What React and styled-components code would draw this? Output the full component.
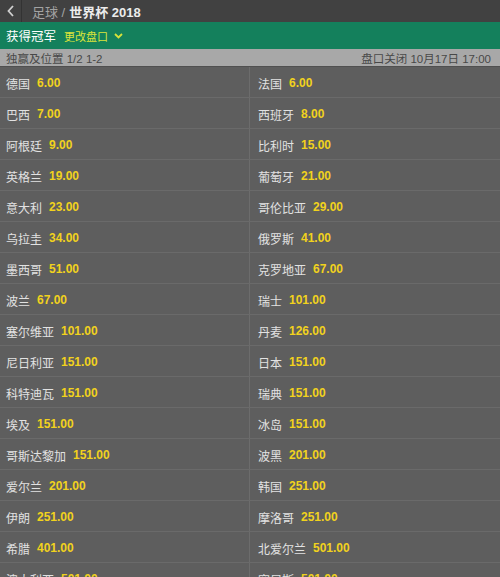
import styled, { createGlobalStyle } from "styled-components";

const GlobalStyle = createGlobalStyle`
  html, body {
    margin: 0;
    padding: 0;
    background: #5e5e5e;
    font-family: "Liberation Sans", "Noto Sans CJK SC", sans-serif;
  }
`;

const selections = [
  ["德国", "6.00", "法国", "6.00"],
  ["巴西", "7.00", "西班牙", "8.00"],
  ["阿根廷", "9.00", "比利时", "15.00"],
  ["英格兰", "19.00", "葡萄牙", "21.00"],
  ["意大利", "23.00", "哥伦比亚", "29.00"],
  ["乌拉圭", "34.00", "俄罗斯", "41.00"],
  ["墨西哥", "51.00", "克罗地亚", "67.00"],
  ["波兰", "67.00", "瑞士", "101.00"],
  ["塞尔维亚", "101.00", "丹麦", "126.00"],
  ["尼日利亚", "151.00", "日本", "151.00"],
  ["科特迪瓦", "151.00", "瑞典", "151.00"],
  ["埃及", "151.00", "冰岛", "151.00"],
  ["哥斯达黎加", "151.00", "波黑", "201.00"],
  ["爱尔兰", "201.00", "韩国", "251.00"],
  ["伊朗", "251.00", "摩洛哥", "251.00"],
  ["希腊", "401.00", "北爱尔兰", "501.00"],
  ["澳大利亚", "501.00", "突尼斯", "501.00"],
];

const App = () => {
  return (
    <>
      <GlobalStyle />
      <Page>
        <TopBar>
          <BackButton>
            <svg width="8" height="12" viewBox="0 0 8 12">
              <path d="M6 1 L1.5 6 L6 11" fill="none" stroke="#d0d0d0" strokeWidth="1.8" />
            </svg>
          </BackButton>
          <Crumbs>
            <CrumbMuted>足球 /</CrumbMuted>
            <CrumbCurrent>世界杯 2018</CrumbCurrent>
          </Crumbs>
        </TopBar>
        <MarketBar>
          <MarketTitle>获得冠军</MarketTitle>
          <ChangeMarket>
            更改盘口
            <svg width="9" height="6" viewBox="0 0 9 6">
              <path d="M1 1 L4.5 4.5 L8 1" fill="none" stroke="#d8e23a" strokeWidth="1.8" />
            </svg>
          </ChangeMarket>
        </MarketBar>
        <InfoBar>
          <span>独赢及位置 1/2 1-2</span>
          <span>盘口关闭 10月17日 17:00</span>
        </InfoBar>
        <Grid>
          {selections.map(([a, oa, b, ob]) => (
            <Row key={a}>
              <Cell>
                <Name>{a}</Name>
                <Odds>{oa}</Odds>
              </Cell>
              <Cell $right>
                <Name>{b}</Name>
                <Odds>{ob}</Odds>
              </Cell>
            </Row>
          ))}
        </Grid>
      </Page>
    </>
  );
};

export default App;

const Page = styled.div`
  width: 500px;
  height: 577px;
  overflow: hidden;
  background: #5e5e5e;
`;

const TopBar = styled.div`
  height: 22px;
  display: flex;
  align-items: center;
  background: #414141;
`;

const BackButton = styled.div`
  width: 22px;
  height: 22px;
  display: flex;
  align-items: center;
  justify-content: center;
  border-right: 1px solid #333333;
  box-sizing: border-box;
`;

const Crumbs = styled.div`
  display: flex;
  gap: 4px;
  padding-left: 10px;
  font-size: 13px;
`;

const CrumbMuted = styled.span`
  color: #a3a3a3;
`;

const CrumbCurrent = styled.span`
  color: #ececec;
  font-weight: bold;
`;

const MarketBar = styled.div`
  height: 27px;
  display: flex;
  align-items: center;
  gap: 8px;
  padding: 0 6px;
  background: #14805c;
`;

const MarketTitle = styled.span`
  color: #ffffff;
  font-size: 12.5px;
`;

const ChangeMarket = styled.span`
  display: flex;
  align-items: center;
  gap: 6px;
  color: #dbe43a;
  font-size: 11px;
`;

const InfoBar = styled.div`
  height: 17px;
  display: flex;
  align-items: center;
  justify-content: space-between;
  padding: 0 9px 0 6px;
  background: #a8a8a8;
  color: #484848;
  font-size: 11.5px;
  border-bottom: 1px solid #505050;
`;

const Grid = styled.div`
  display: flex;
  flex-direction: column;
`;

const Row = styled.div`
  display: grid;
  grid-template-columns: 249px 1fr;
  height: 31px;
  box-sizing: border-box;
  border-bottom: 1px solid #6a6a6a;
`;

const Cell = styled.div`
  display: flex;
  align-items: center;
  gap: 7px;
  padding-top: 2px;
  padding-left: ${(p) => (p.$right ? "8px" : "6px")};
  border-left: ${(p) => (p.$right ? "1px solid #6c6c6c" : "none")};
`;

const Name = styled.span`
  color: #e2e2e2;
  font-size: 12px;
`;

const Odds = styled.span`
  color: #f1d21d;
  font-size: 12px;
  font-weight: bold;
`;
